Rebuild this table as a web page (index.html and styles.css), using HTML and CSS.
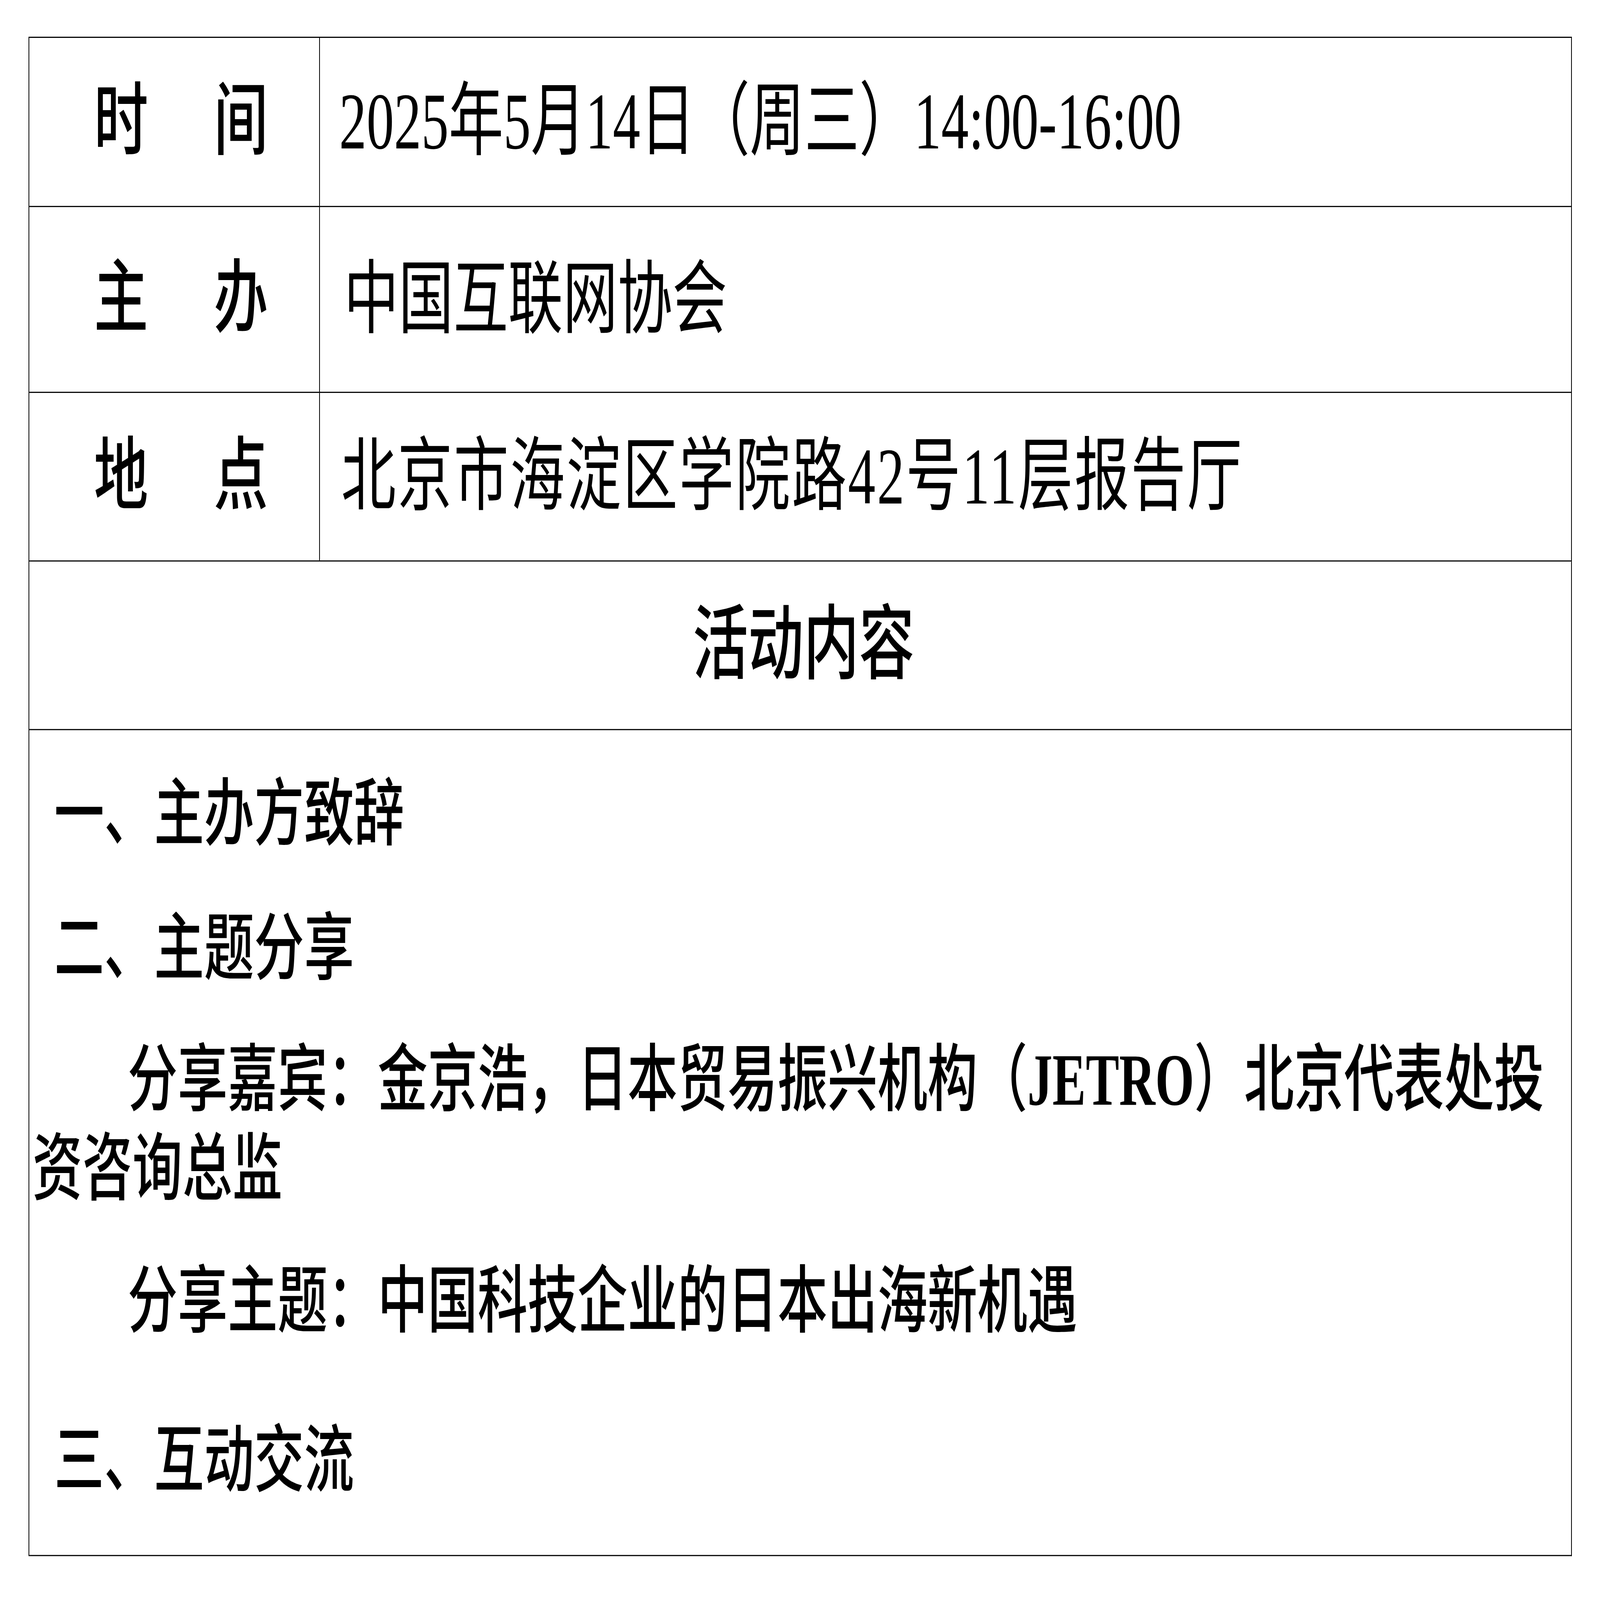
FILE: index.html
```html
<!DOCTYPE html>
<html lang="zh-CN">
<head>
<meta charset="utf-8">
<title>活动安排</title>
<link rel="stylesheet" href="styles.css">
</head>
<body>
<div class="sheet">
  <div class="row r1">
    <div class="label"><span>时</span><span>间</span></div>
    <div class="value date">2025年5月14日（周三）14:00-16:00</div>
  </div>
  <div class="row r2">
    <div class="label"><span>主</span><span>办</span></div>
    <div class="value org">中国互联网协会</div>
  </div>
  <div class="row r3">
    <div class="label"><span>地</span><span>点</span></div>
    <div class="value addr">北京市海淀区学院路42号11层报告厅</div>
  </div>
  <div class="row r4">
    <div class="heading">活动内容</div>
  </div>
  <div class="row r5">
    <div class="body">
      <p class="item">一、主办方致辞</p>
      <p class="item second">二、主题分享</p>
      <p class="sub guest"><span>分享嘉宾：金京浩，日本贸易振兴机构（</span><b class="latin">JETRO</b><span>）北京代表处投</span><span>资咨询总监</span></p>
      <p class="sub topic">分享主题：中国科技企业的日本出海新机遇</p>
      <p class="item last">三、互动交流</p>
    </div>
  </div>
</div>
</body>
</html>
```

FILE: styles.css
```css
/* One design unit = one pixel of the 7073 x 4817 reference sheet.
   --u follows the viewport width; --r stretches the sheet vertically
   so that it also fills the viewport height in the reference's proportion. */
:root {
  --u: calc(100vw / 7073);
  --r: tan(atan2(calc(100vh * 7073), calc(100vw * 4817)));
}

html {
  margin: 0;
  padding: 0;
  background: #ffffff;
  overflow: hidden;
}

body {
  margin: 0;
  padding: 0;
  min-height: 100vh;
  background: #ffffff;
  font-family: "Liberation Serif", "Noto Sans CJK SC", serif;
  color: #000000;
}

.sheet {
  margin: 0;
  position: relative;
  top: calc(111 * 100vh / 4817);
  margin-left: calc(126 * var(--u));
  width: calc(6823 * var(--u));
  box-sizing: border-box;
  border-top: calc(4 * var(--u)) solid #000000;
  border-left: calc(4 * var(--u)) solid #000000;
  transform-origin: 0 0;
  transform: scaleY(var(--r));
}

.row {
  display: flex;
  box-sizing: border-box;
  border-right: calc(4 * var(--u)) solid #000000;
  border-bottom: calc(4 * var(--u)) solid #000000;
}

.r1 { height: calc(509 * var(--u)); }
.r2 { height: calc(560 * var(--u)); }
.r3 { height: calc(507 * var(--u)); }
.r4 { height: calc(508 * var(--u)); }
.r5 { height: calc(2487 * var(--u)); }

.label {
  width: calc(1285 * var(--u));
  flex: none;
  box-sizing: border-box;
  border-right: calc(4 * var(--u)) solid #000000;
  display: flex;
  align-items: center;
  justify-content: center;
  gap: calc(290 * var(--u));
  padding-left: calc(60 * var(--u));
  font-size: calc(240 * var(--u));
  font-weight: 500;
  line-height: 1;
}

.value {
  flex: 1;
  display: flex;
  align-items: center;
  font-size: calc(242 * var(--u));
  line-height: 1.2;
  font-weight: 400;
  white-space: nowrap;
}

.date { padding-left: calc(85 * var(--u)); }
.org { padding-left: calc(106 * var(--u)); }
.addr {
  padding-left: calc(94 * var(--u));
  letter-spacing: calc(7 * var(--u));
}

.heading {
  flex: 1;
  display: flex;
  align-items: center;
  justify-content: center;
  padding-left: calc(30 * var(--u));
  font-size: calc(245 * var(--u));
  font-weight: 500;
  line-height: 1;
}

.body {
  flex: 1;
  box-sizing: border-box;
  padding-top: calc(122 * var(--u));
  padding-right: calc(16 * var(--u));
  padding-left: calc(14 * var(--u));
}

.body p {
  margin: 0;
  font-size: calc(221 * var(--u));
  line-height: calc(268 * var(--u));
  font-weight: 500;
}

.item { text-indent: calc(96 * var(--u)); }
.sub { text-indent: calc(421 * var(--u)); }

.body .second { margin-top: calc(135 * var(--u)); }
.body .guest { margin-top: calc(127 * var(--u)); }
.body .topic { margin-top: calc(131 * var(--u)); }
.body .last { margin-top: calc(212 * var(--u)); }

.latin {
  font-family: "Liberation Serif", serif;
  font-weight: 700;
}
```
